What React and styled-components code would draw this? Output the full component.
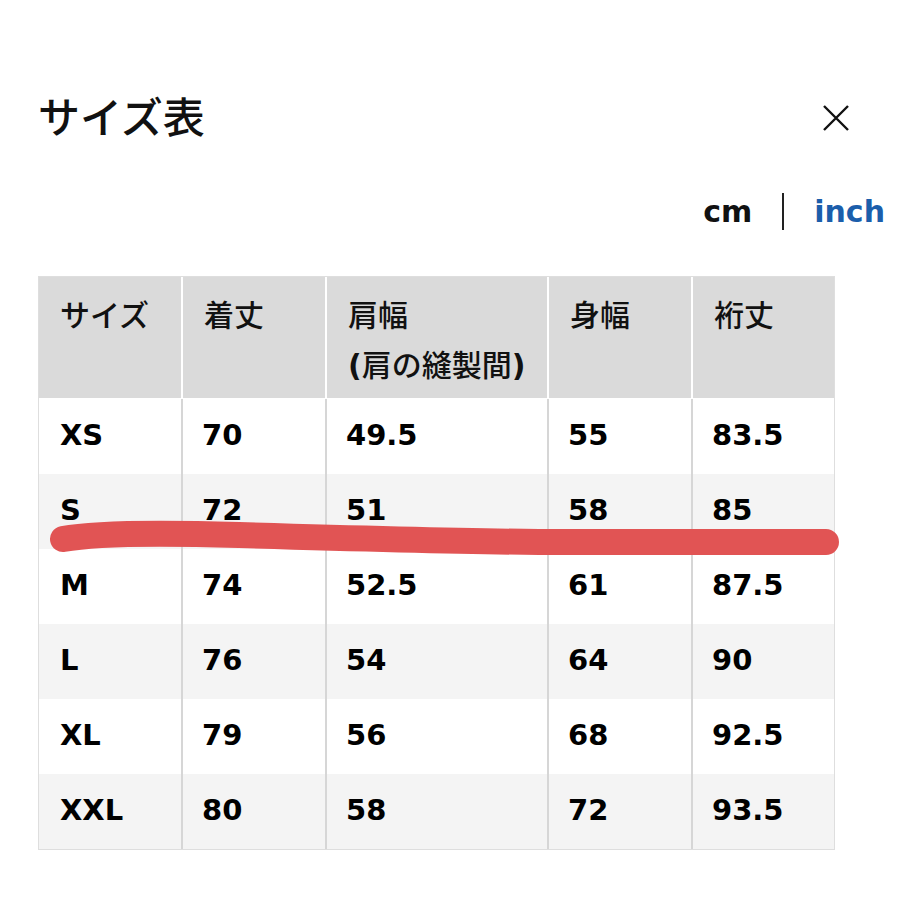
import styled, { createGlobalStyle } from "styled-components";

const GlobalStyle = createGlobalStyle`
  html, body {
    margin: 0;
    padding: 0;
    background: #fff;
  }
  body {
    font-family: "Noto Sans CJK JP", "DejaVu Sans", sans-serif;
    color: #111;
  }
`;

const columns = ["142px", "144px", "222px", "144px", "1fr"];

const rows = [
  ["XS", "70", "49.5", "55", "83.5"],
  ["S", "72", "51", "58", "85"],
  ["M", "74", "52.5", "61", "87.5"],
  ["L", "76", "54", "64", "90"],
  ["XL", "79", "56", "68", "92.5"],
  ["XXL", "80", "58", "72", "93.5"],
];

function App() {
  return (
    <>
      <GlobalStyle />
      <Page>
        <TitleBar>
          <Title>サイズ表</Title>
          <CloseButton aria-label="close">
            <svg width="28" height="28" viewBox="0 0 28 28">
              <path d="M2 2 L26 26 M26 2 L2 26" stroke="#111" strokeWidth="2.4" />
            </svg>
          </CloseButton>
        </TitleBar>

        <UnitRow>
          <Unit>cm</Unit>
          <Divider />
          <Unit $active>inch</Unit>
        </UnitRow>

        <Table>
          <HeaderRow>
            <HeadCell>サイズ</HeadCell>
            <HeadCell>着丈</HeadCell>
            <HeadCell>
              肩幅
              <br />
              <Paren>(</Paren>肩の縫製間<Paren>)</Paren>
            </HeadCell>
            <HeadCell>身幅</HeadCell>
            <HeadCell>裄丈</HeadCell>
          </HeaderRow>
          {rows.map((row, i) => (
            <BodyRow key={row[0]} $alt={i % 2 === 1}>
              {row.map((value, j) => (
                <Cell key={j} $first={j === 0}>
                  {value}
                </Cell>
              ))}
            </BodyRow>
          ))}
          <Marker viewBox="0 0 797 577" width="797" height="577">
            <path
              d="M24 262 C 50 257, 100 255, 200 258 S 400 264, 500 265 L 787 265"
              fill="none"
              stroke="#e15454"
              strokeWidth="26"
              strokeLinecap="round"
            />
          </Marker>
        </Table>
      </Page>
    </>
  );
}

const Page = styled.div`
  width: 900px;
  height: 900px;
  box-sizing: border-box;
  padding: 91px 0 0 38px;
  overflow: hidden;
`;

const TitleBar = styled.div`
  width: 812px;
  height: 48px;
  display: flex;
  align-items: center;
  justify-content: space-between;
`;

const Title = styled.h1`
  margin: 0;
  font-size: 42px;
  font-weight: 500;
  line-height: 48px;
  color: #111;
`;

const CloseButton = styled.button`
  border: 0;
  background: none;
  padding: 0;
  margin-top: 6px;
  width: 28px;
  height: 28px;
  display: flex;
`;

const UnitRow = styled.div`
  width: 847px;
  margin-top: 54px;
  display: flex;
  justify-content: flex-end;
  align-items: center;
  gap: 30px;
`;

const Unit = styled.span`
  font-family: "DejaVu Sans", sans-serif;
  font-weight: 700;
  font-size: 30px;
  line-height: 36px;
  color: ${(p) => (p.$active ? "#1b5eab" : "#111")};
`;

const Divider = styled.span`
  width: 2px;
  height: 37px;
  background: #222;
`;

const Table = styled.div`
  position: relative;
  margin-top: 46px;
  width: 797px;
  box-sizing: border-box;
  border: 1px solid #dedede;
`;

const HeaderRow = styled.div`
  display: grid;
  grid-template-columns: ${columns.join(" ")};
  height: 121px;
  border-bottom: 1px solid #fff;
`;

const HeadCell = styled.div`
  background: #dadada;
  border-left: 2px solid #fff;
  padding: 11px 0 0 21px;
  font-size: 30px;
  font-weight: 500;
  line-height: 50px;
  color: #111;

  &:first-child {
    border-left: 0;
  }
`;

const Paren = styled.span`
  font-family: "DejaVu Sans", sans-serif;
  font-weight: 700;
`;

const BodyRow = styled.div`
  display: grid;
  grid-template-columns: ${columns.join(" ")};
  height: 75px;
  background: ${(p) => (p.$alt ? "#f4f4f4" : "#fff")};
`;

const Cell = styled.div`
  display: flex;
  align-items: center;
  padding-left: ${(p) => (p.$first ? "21px" : "19px")};
  padding-bottom: 4px;
  border-left: ${(p) => (p.$first ? "0" : "2px solid #d6d6d6")};
  font-family: "DejaVu Sans", sans-serif;
  font-weight: 700;
  font-size: 29px;
  color: #000;
`;

const Marker = styled.svg`
  position: absolute;
  left: 0;
  top: 0;
  pointer-events: none;
  overflow: visible;
`;

export default App;
